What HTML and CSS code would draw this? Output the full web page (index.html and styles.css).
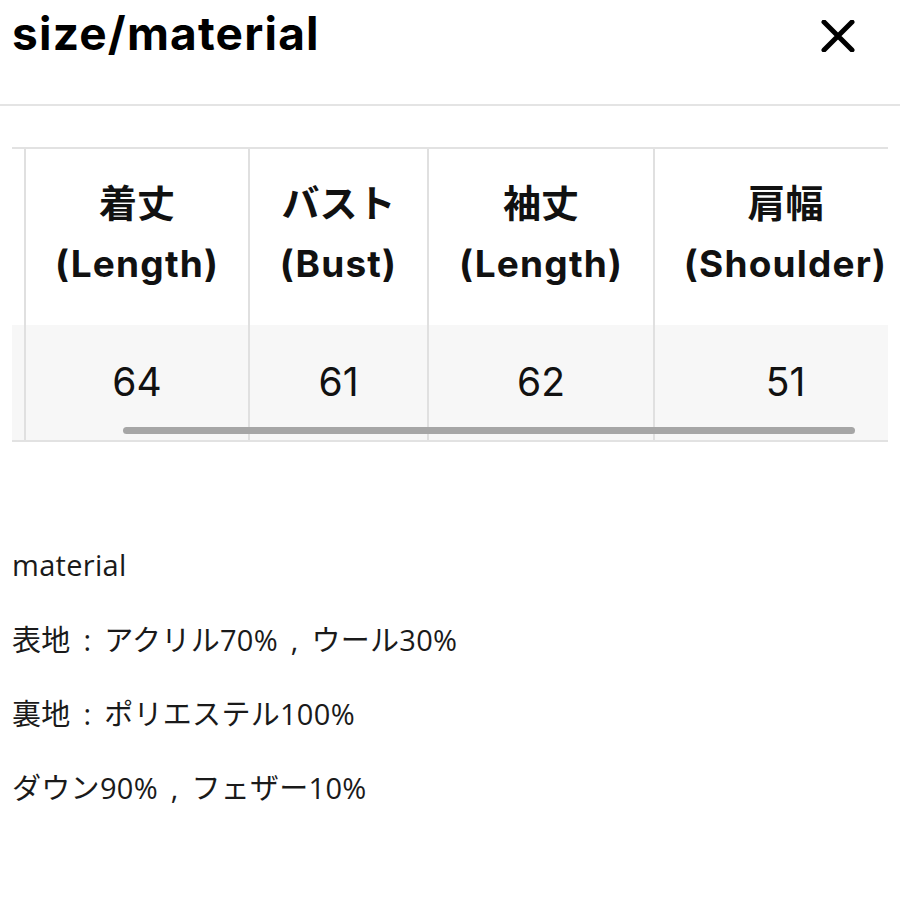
FILE: index.html
```html
<!DOCTYPE html>
<html lang="ja">
<head>
<meta charset="utf-8">
<title>size/material</title>
<link rel="stylesheet" href="styles.css">
</head>
<body>
<header class="top">
  <h1 class="title">size/material</h1>
  <button class="close" aria-label="close">
    <svg width="34" height="32" viewBox="0 0 34 32"><path d="M3 2 L31 30 M31 2 L3 30" stroke="#000" stroke-width="5" stroke-linecap="round" fill="none"/></svg>
  </button>
</header>
<div class="divider"></div>
<div class="table-wrap">
  <div class="table-scroll">
    <table class="size-table">
      <colgroup>
        <col class="c0"><col class="c1"><col class="c2"><col class="c3"><col class="c4">
      </colgroup>
      <thead>
        <tr>
          <th></th>
          <th><span class="jp">着丈</span><span class="en">(Length)</span></th>
          <th><span class="jp">バスト</span><span class="en">(Bust)</span></th>
          <th><span class="jp">袖丈</span><span class="en">(Length)</span></th>
          <th><span class="jp">肩幅</span><span class="en">(Shoulder)</span></th>
        </tr>
      </thead>
      <tbody>
        <tr>
          <td></td>
          <td>64</td>
          <td>61</td>
          <td>62</td>
          <td>51</td>
        </tr>
      </tbody>
    </table>
  </div>
  <div class="scrollbar"></div>
</div>
<section class="material">
  <p>material</p>
  <p>表地 : アクリル70% , ウール30%</p>
  <p>裏地 : ポリエステル100%</p>
  <p>ダウン90% , フェザー10%</p>
</section>
</body>
</html>
```
FILE: styles.css
```css
html, body {
  margin: 0;
  padding: 0;
  background: #fff;
}
body {
  width: 900px;
  height: 900px;
  overflow: hidden;
  color: #111;
  font-family: "Noto Sans CJK JP", sans-serif;
}
.top {
  display: flex;
  align-items: flex-start;
  justify-content: space-between;
  height: 104px;
  padding: 0 12px;
}
.title {
  margin: 0;
  padding-top: 3px;
  font-family: "Inter", "Liberation Sans", sans-serif;
  font-weight: 700;
  font-size: 46px;
  line-height: 60px;
  letter-spacing: 1.2px;
  color: #000;
}
.close {
  margin: 20px 33px 0 0;
  padding: 0;
  border: 0;
  background: none;
  width: 34px;
  height: 32px;
}
.close svg { display: block; }
.divider {
  height: 2px;
  background: #e4e4e4;
}
.table-wrap {
  position: relative;
  margin: 41px 12px 0 12px;
  overflow: hidden;
  border-top: 2px solid #e2e2e2;
  border-bottom: 2px solid #e2e2e2;
}
.table-scroll {
  overflow: hidden;
}
.size-table {
  border-collapse: collapse;
  table-layout: fixed;
  margin-left: -107px;
  width: 1011px;
}
.c0 { width: 120px; }
.c1 { width: 224px; }
.c2 { width: 179px; }
.c3 { width: 226px; }
.c4 { width: 262px; }
.size-table th, .size-table td {
  border-left: 2px solid #e0e0e0;
  text-align: center;
  padding: 0;
}
.size-table th:first-child, .size-table td:first-child { border-left: 0; }
.size-table th {
  height: 176px;
  background: #fff;
  font-weight: 700;
  vertical-align: top;
  padding-top: 27px;
  box-sizing: border-box;
}
.size-table th .jp {
  display: block;
  font-family: "Noto Sans CJK JP", sans-serif;
  font-size: 38px;
  line-height: 50px;
  color: #111;
}
.size-table th .en {
  display: block;
  margin-top: 13px;
  font-family: "Inter", "Noto Sans CJK JP", sans-serif;
  font-size: 37px;
  font-weight: 700;
  letter-spacing: 1.2px;
  line-height: 50px;
  color: #111;
  white-space: nowrap;
}
.size-table td {
  height: 115px;
  background: #f7f7f7;
  font-family: "Inter", sans-serif;
  font-size: 39px;
  font-weight: 400;
  color: #111;
  vertical-align: top;
  padding-top: 33px;
  box-sizing: border-box;
}
.scrollbar {
  position: absolute;
  left: 111px;
  width: 732px;
  bottom: 6px;
  height: 7px;
  border-radius: 4px;
  background: #a6a6a6;
}
.material {
  padding: 103px 12px 0 12px;
}
.material p {
  margin: 0 0 34px 0;
  font-family: "Open Sans", "Noto Sans CJK JP", sans-serif;
  font-size: 29px;
  line-height: 40px;
  letter-spacing: 0.3px;
  word-spacing: 5px;
  color: #1a1a1a;
}
.material p:first-child { margin-bottom: 35px; }
```
